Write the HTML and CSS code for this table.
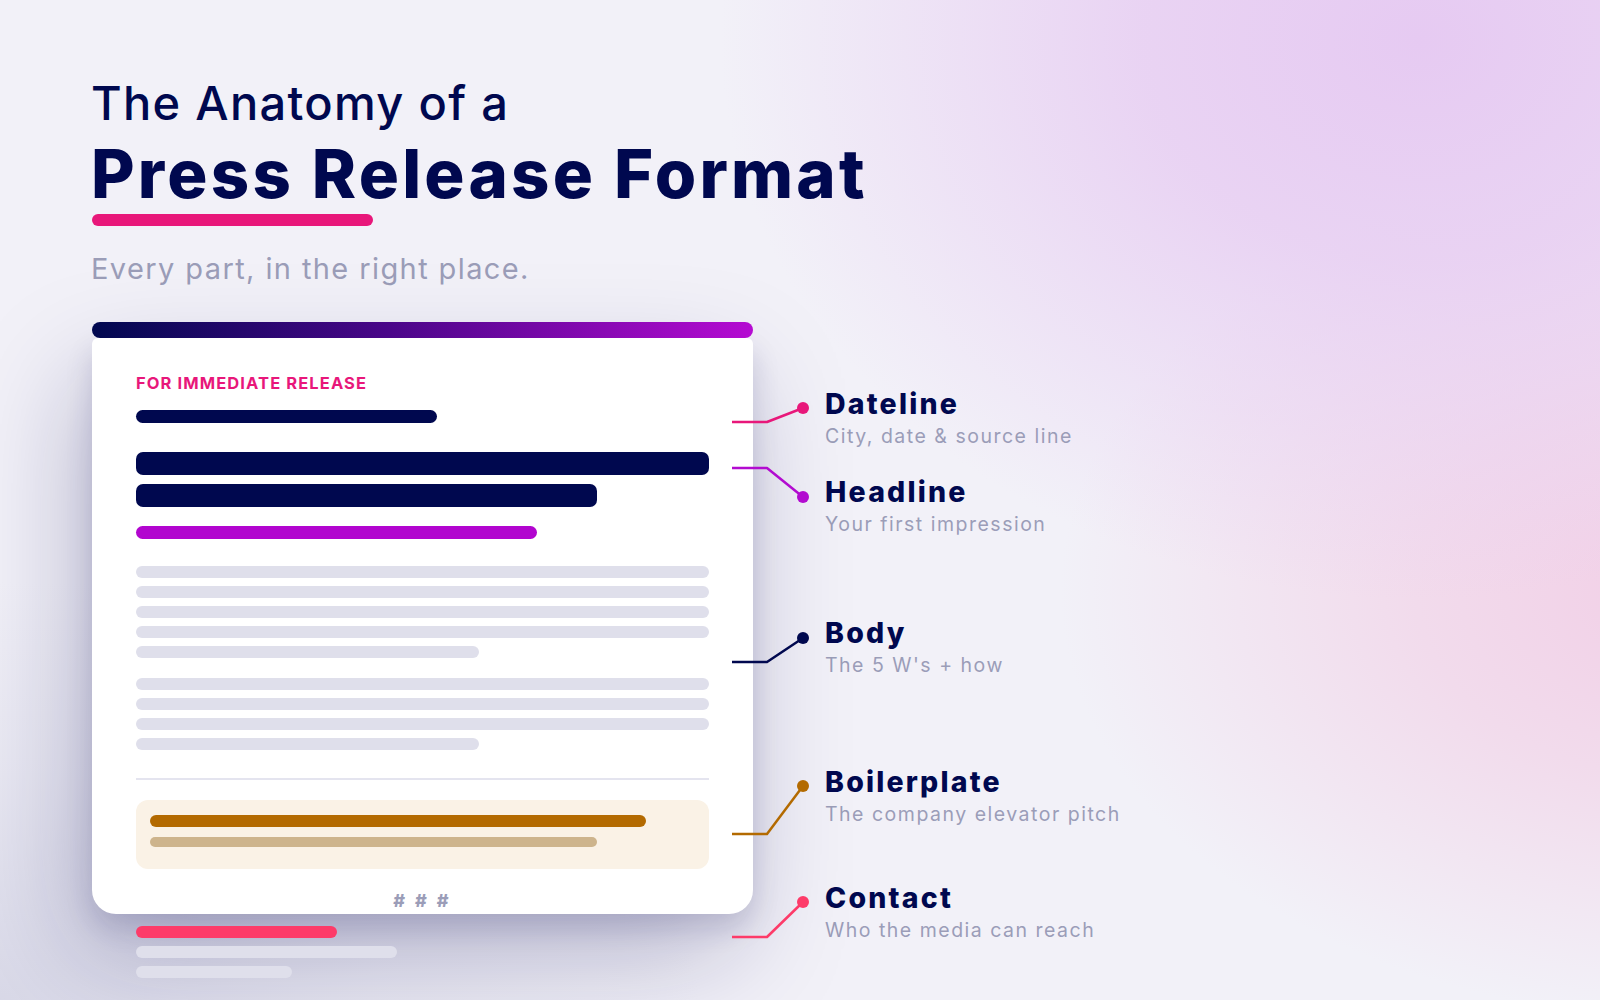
FILE: index.html
```html
<!DOCTYPE html>
<html lang="en">
<head>
<meta charset="utf-8">
<title>The Anatomy of a Press Release Format</title>
<link rel="stylesheet" href="styles.css">
</head>
<body>
<main class="page">
  <header class="hero">
    <h1 class="title">
      <span class="title-pre">The Anatomy of a</span>
      <span class="title-main">Press Release Format</span>
    </h1>
    <div class="title-underline"></div>
    <p class="tagline">Every part, in the right place.</p>
  </header>

  <section class="anatomy">
    <div class="doc-col">
      <article class="doc">
        <div class="doc-bar"></div>
        <div class="doc-body">
          <div class="kicker">FOR IMMEDIATE RELEASE</div>
          <div class="bar bar-dateline"></div>
          <div class="headline-bars">
            <div class="bar bar-head bar-head-1"></div>
            <div class="bar bar-head bar-head-2"></div>
          </div>
          <div class="bar bar-sub"></div>
          <div class="lines lines-first">
            <div class="line"></div>
            <div class="line"></div>
            <div class="line"></div>
            <div class="line"></div>
            <div class="line short"></div>
          </div>
          <div class="lines lines-second">
            <div class="line"></div>
            <div class="line"></div>
            <div class="line"></div>
            <div class="line short"></div>
          </div>
          <div class="divider"></div>
          <div class="boiler">
            <div class="bar boiler-1"></div>
            <div class="bar boiler-2"></div>
          </div>
          <div class="end-mark"># # #</div>
        </div>
      </article>
      <div class="contact-lines">
        <div class="bar contact-1"></div>
        <div class="bar contact-2"></div>
        <div class="bar contact-3"></div>
      </div>
    </div>

    <ul class="labels">
      <li class="label label-dateline">
        <span class="label-title">Dateline</span>
        <span class="label-sub">City, date &amp; source line</span>
      </li>
      <li class="label label-headline">
        <span class="label-title">Headline</span>
        <span class="label-sub">Your first impression</span>
      </li>
      <li class="label label-body">
        <span class="label-title">Body</span>
        <span class="label-sub">The 5 W's + how</span>
      </li>
      <li class="label label-boiler">
        <span class="label-title">Boilerplate</span>
        <span class="label-sub">The company elevator pitch</span>
      </li>
      <li class="label label-contact">
        <span class="label-title">Contact</span>
        <span class="label-sub">Who the media can reach</span>
      </li>
    </ul>
  </section>

  <svg class="connectors" width="1600" height="1000" viewBox="0 0 1600 1000" aria-hidden="true">
    <g fill="none" stroke-width="2.5" stroke-linejoin="round">
      <path d="M732 422 H767 L803 408" stroke="#e8177a"/>
      <path d="M732 468 H767 L803 497" stroke="#b20bd0"/>
      <path d="M732 662 H767 L803 638" stroke="#00084f"/>
      <path d="M732 834 H767 L803 786" stroke="#b36a00"/>
      <path d="M732 937 H767 L803 902" stroke="#fd3b69"/>
    </g>
    <circle cx="803" cy="408" r="6" fill="#e8177a"/>
    <circle cx="803" cy="497" r="6" fill="#b20bd0"/>
    <circle cx="803" cy="638" r="6" fill="#00084f"/>
    <circle cx="803" cy="786" r="6" fill="#b36a00"/>
    <circle cx="803" cy="902" r="6" fill="#fd3b69"/>
  </svg>
</main>
</body>
</html>
```

FILE: styles.css
```css
* { box-sizing: border-box; }

html, body {
  margin: 0;
  padding: 0;
}

body {
  width: 1600px;
  height: 1000px;
  overflow: hidden;
  font-family: "Inter", "Liberation Sans", sans-serif;
  color: #00084f;
  background: #f2f1f8;
}

.page {
  position: relative;
  width: 1600px;
  height: 1000px;
  overflow: hidden;
  padding: 75px 0 0 91px;
  background:
    radial-gradient(ellipse 700px 560px at 1420px 40px, rgba(230, 202, 242, 1) 0%, rgba(231, 204, 242, 0.8) 40%, rgba(240, 236, 246, 0) 100%),
    radial-gradient(ellipse 640px 430px at 1700px 590px, rgba(242, 206, 230, 1) 0%, rgba(242, 210, 231, 0.7) 45%, rgba(242, 240, 248, 0) 100%),
    radial-gradient(ellipse 700px 420px at 0px 1000px, rgba(214, 214, 230, 0.9) 0%, rgba(220, 220, 234, 0.4) 55%, rgba(242, 241, 248, 0) 100%),
    #f2f1f8;
}

/* ---------- Hero ---------- */

.title {
  margin: 0;
  font-weight: normal;
}

.title-pre {
  display: block;
  font-size: 47px;
  line-height: 56px;
  font-weight: 500;
  letter-spacing: 1.3px;
  color: #00084f;
}

.title-main {
  display: block;
  margin-top: 5px;
  font-size: 67px;
  line-height: 76px;
  font-weight: 800;
  letter-spacing: 3.2px;
  color: #00084f;
}

.title-underline {
  margin-top: 2px;
  margin-left: 1px;
  width: 281px;
  height: 12px;
  border-radius: 6px;
  background: #e8177a;
}

.tagline {
  margin: 25px 0 0;
  font-size: 29px;
  line-height: 36px;
  font-weight: 400;
  letter-spacing: 1.4px;
  color: #9b9db8;
}

/* ---------- Anatomy ---------- */

.anatomy {
  display: flex;
  gap: 72px;
  margin-top: 35px;
  margin-left: 1px;
}

.doc-col {
  width: 661px;
  flex: none;
}

.doc {
  width: 661px;
}

.doc-bar {
  position: relative;
  z-index: 2;
  height: 16px;
  border-radius: 8px;
  background: linear-gradient(90deg, #00084f 0%, #4a0689 45%, #b50bd2 100%);
}

.doc-body {
  position: relative;
  z-index: 1;
  background: #ffffff;
  border-radius: 6px 6px 24px 24px;
  padding: 35px 44px 3px;
  box-shadow:
    -14px 40px 110px rgba(14, 14, 84, 0.26),
    0 14px 28px rgba(14, 14, 84, 0.14);
}

.kicker {
  font-size: 16.5px;
  line-height: 20px;
  font-weight: 700;
  color: #e8177a;
  letter-spacing: 1.1px;
}

.bar {
  border-radius: 999px;
}

.bar-dateline {
  margin-top: 17px;
  width: 301px;
  height: 13px;
  background: #00084f;
}

.headline-bars {
  margin-top: 29px;
  display: flex;
  flex-direction: column;
  gap: 9px;
}

.bar-head {
  height: 23px;
  border-radius: 7px;
  background: #00084f;
}

.bar-head-1 { width: 573px; }
.bar-head-2 { width: 461px; }

.bar-sub {
  margin-top: 19px;
  width: 401px;
  height: 13px;
  background: #b205cf;
}

.lines {
  display: flex;
  flex-direction: column;
  gap: 8px;
}

.lines-first { margin-top: 27px; }
.lines-second { margin-top: 20px; }

.line {
  height: 12px;
  border-radius: 6px;
  background: #dfdfeb;
}

.line.short { width: 343px; }

.divider {
  margin-top: 28px;
  height: 2px;
  background: #e4e4ef;
}

.boiler {
  margin-top: 20px;
  padding: 15px 14px 22px;
  border-radius: 12px;
  background: #faf2e6;
}

.boiler-1 {
  width: 496px;
  height: 12px;
  background: #b36a00;
}

.boiler-2 {
  margin-top: 10px;
  width: 447px;
  height: 10px;
  background: #cdb48c;
}

.end-mark {
  margin-top: 22px;
  text-align: center;
  font-size: 18px;
  line-height: 20px;
  font-weight: 800;
  letter-spacing: 3px;
  color: #9b9db8;
}

.contact-lines {
  position: relative;
  z-index: 2;
  margin-top: 12px;
  padding-left: 44px;
  display: flex;
  flex-direction: column;
  gap: 8px;
}

.contact-lines .bar { height: 12px; }

.contact-1 { width: 201px; background: #fd3b69; }
.contact-2 { width: 261px; background: #dfdfeb; }
.contact-3 { width: 156px; background: #dfdfeb; }

/* ---------- Labels ---------- */

.labels {
  list-style: none;
  margin: 0;
  padding: 0;
  display: flex;
  flex-direction: column;
}

.label {
  display: flex;
  flex-direction: column;
}

.label-title {
  font-size: 28.5px;
  line-height: 34px;
  font-weight: 800;
  letter-spacing: 2.2px;
  color: #00084f;
}

.label-sub {
  margin-top: 2px;
  font-size: 19.5px;
  line-height: 26px;
  font-weight: 400;
  letter-spacing: 1.5px;
  color: #9b9db8;
}

.label-dateline { margin-top: 65px; }
.label-headline { margin-top: 26px; }
.label-body { margin-top: 79px; }
.label-boiler { margin-top: 87px; }
.label-contact { margin-top: 54px; }

/* ---------- Connectors (diagram overlay) ---------- */

.connectors {
  position: absolute;
  left: 0;
  top: 0;
  z-index: 5;
  pointer-events: none;
}
```
